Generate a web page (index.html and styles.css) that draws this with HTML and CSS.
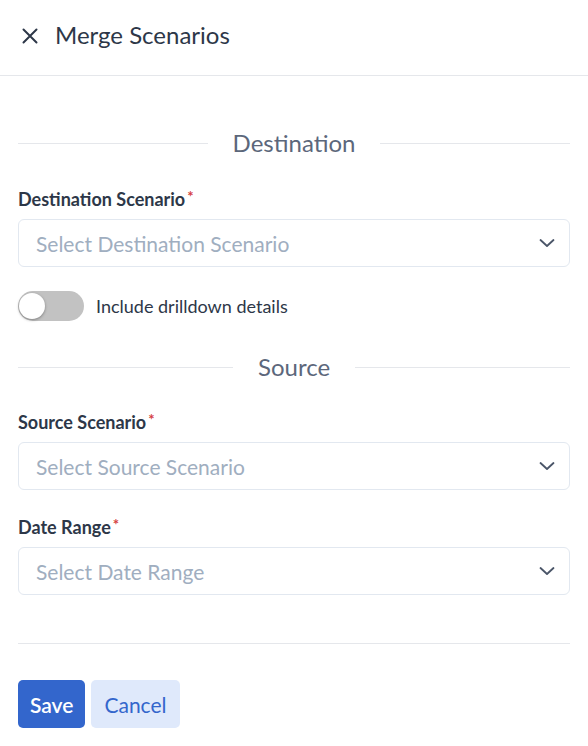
FILE: index.html
```html
<!DOCTYPE html>
<html lang="en">
<head>
  <meta charset="UTF-8">
  <meta name="viewport" content="width=device-width, initial-scale=1.0">
  <title>Merge Scenarios</title>
  <link rel="stylesheet" href="styles.css">
</head>
<body>
  <div class="header">
    <button class="close-btn" aria-label="Close">
      <svg width="16" height="16" viewBox="0 0 16 16">
        <path d="M1.5 1.5 L14.5 14.5 M14.5 1.5 L1.5 14.5" stroke="#2d3748" stroke-width="2" stroke-linecap="round" fill="none"/>
      </svg>
    </button>
    <h1 class="title">Merge Scenarios</h1>
  </div>

  <div class="content">
    <div class="section-title section-first"><span>Destination</span></div>

    <div class="field">
      <label class="label">Destination Scenario<span class="req">*</span></label>
      <div class="select">
        <span class="placeholder">Select Destination Scenario</span>
        <svg class="chevron" width="16" height="10" viewBox="0 0 16 10">
          <path d="M1.5 2 L8 8 L14.5 2" stroke="#4a5568" stroke-width="1.8" fill="none" stroke-linecap="round" stroke-linejoin="round"/>
        </svg>
      </div>
    </div>

    <div class="toggle-row">
      <div class="toggle"><div class="knob"></div></div>
      <span class="toggle-label">Include drilldown details</span>
    </div>

    <div class="section-title section-second"><span>Source</span></div>

    <div class="field">
      <label class="label">Source Scenario<span class="req">*</span></label>
      <div class="select">
        <span class="placeholder">Select Source Scenario</span>
        <svg class="chevron" width="16" height="10" viewBox="0 0 16 10">
          <path d="M1.5 2 L8 8 L14.5 2" stroke="#4a5568" stroke-width="1.8" fill="none" stroke-linecap="round" stroke-linejoin="round"/>
        </svg>
      </div>
    </div>

    <div class="field field-last">
      <label class="label">Date Range<span class="req">*</span></label>
      <div class="select">
        <span class="placeholder">Select Date Range</span>
        <svg class="chevron" width="16" height="10" viewBox="0 0 16 10">
          <path d="M1.5 2 L8 8 L14.5 2" stroke="#4a5568" stroke-width="1.8" fill="none" stroke-linecap="round" stroke-linejoin="round"/>
        </svg>
      </div>
    </div>

    <div class="footer">
      <button class="btn btn-primary">Save</button>
      <button class="btn btn-secondary">Cancel</button>
    </div>
  </div>
</body>
</html>
```

FILE: styles.css
```css
body {
  margin: 0;
  padding: 0;
  font-family: Lato, "Noto Sans", sans-serif;
  background: #fff;
  color: #2d3748;
}

.header {
  height: 75px;
  display: flex;
  align-items: center;
  border-bottom: 1px solid #e5e7eb;
  padding: 0 0 0 22px;
}

.close-btn {
  background: none;
  border: none;
  padding: 0;
  width: 16px;
  height: 16px;
  display: flex;
  cursor: pointer;
  margin-top: -3px;
}

.title {
  margin: -5px 0 0 17px;
  font-size: 24px;
  font-weight: 400;
  color: #2d3748;
  line-height: 1;
}

.content {
  padding: 0 18px;
}

.section-title {
  display: flex;
  align-items: center;
  gap: 25px;
  font-size: 24px;
  line-height: 28px;
  color: #5c677b;
}

.section-title::before,
.section-title::after {
  content: "";
  flex: 1;
  height: 1px;
  background: #e5e7eb;
}

.section-first {
  padding-top: 53px;
}

.section-second {
  padding-top: 32px;
}

.field {
  margin-top: 32px;
}

.section-second + .field {
  margin-top: 31px;
}

.field + .field {
  margin-top: 27px;
}

.label {
  display: block;
  font-size: 18px;
  font-weight: 700;
  line-height: 20px;
  color: #2d3748;
  margin-bottom: 10px;
}

.req {
  color: #d53f3f;
  margin-left: 2px;
  font-size: 15px;
  vertical-align: top;
  position: relative;
  top: -3px;
}

.select {
  height: 46px;
  border: 1px solid #e2e8f0;
  border-radius: 6px;
  display: flex;
  align-items: center;
  justify-content: space-between;
  padding: 0 14px 0 17px;
}

.placeholder {
  font-size: 21px;
  color: #a0aec0;
}

.toggle-row {
  display: flex;
  align-items: center;
  margin-top: 24px;
  gap: 12px;
}

.toggle {
  width: 66px;
  height: 30px;
  border-radius: 15px;
  background: #c2c2c2;
  display: flex;
  align-items: center;
}

.knob {
  width: 26px;
  height: 26px;
  border-radius: 50%;
  background: #fff;
  box-shadow: 0 1px 3px rgba(0, 0, 0, 0.35);
  margin-left: 1px;
}

.toggle-label {
  font-size: 18px;
  color: #2d3748;
}

.footer {
  margin-top: 48px;
  border-top: 1px solid #e5e7eb;
  padding-top: 36px;
  display: flex;
  gap: 6px;
}

.btn {
  font-family: Lato, "Noto Sans", sans-serif;
  font-size: 21px;
  height: 48px;
  border: none;
  border-radius: 5px;
  cursor: pointer;
}

.btn-primary {
  background: #3366cc;
  color: #fff;
  font-weight: 600;
  padding: 0 12px;
}

.btn-secondary {
  background: #dfe9fb;
  color: #3366cc;
  padding: 0 13px;
}
```
